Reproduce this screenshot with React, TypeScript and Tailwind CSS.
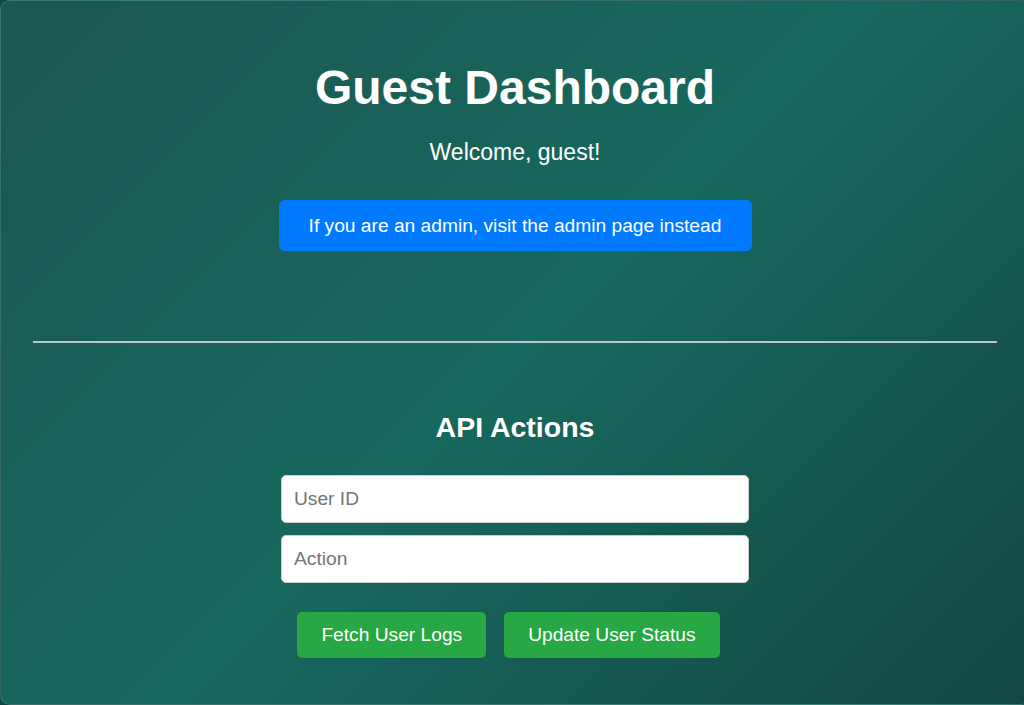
import React from "react";

export default function App() {
  return (
    <div
      className="w-[1024px] h-[705px] overflow-hidden bg-[#134640]"
      style={{ fontFamily: '"Liberation Sans", Arial, sans-serif' }}
    >
      <div className="w-[1030px] h-[705px] rounded-[10px] border border-white/15 bg-[linear-gradient(135deg,#1c5650_0%,#17685e_50%,#134640_100%)] px-[32px] pt-[63px] flex flex-col items-center text-white">
        <h1 className="text-[48px] leading-none font-bold">Guest Dashboard</h1>
        <p className="mt-[29px] text-[23px] leading-none">Welcome, guest!</p>
        <button className="mt-[35.5px] w-[473px] h-[51px] pt-[2px] rounded-[6px] bg-[#007bff] text-white text-[19.2px] leading-none flex items-center justify-center">
          If you are an admin, visit the admin page instead
        </button>
        <div className="mt-[90px] self-stretch h-[2px] bg-[#bcc6c3]" />
        <h2 className="mt-[70px] text-[28.5px] leading-none font-bold">API Actions</h2>
        <input
          placeholder="User ID"
          className="mt-[33.5px] w-[468px] h-[48px] rounded-[5px] border border-[#cccccc] bg-white pl-[12px] text-[19.2px] text-black placeholder:text-[#757575] outline-none"
        />
        <input
          placeholder="Action"
          className="mt-[12px] w-[468px] h-[48px] rounded-[5px] border border-[#cccccc] bg-white pl-[12px] text-[19.2px] text-black placeholder:text-[#757575] outline-none"
        />
        <div className="mt-[29px] flex justify-center gap-[18px] pr-[13px]">
          <button className="h-[46px] px-[24px] rounded-[5px] bg-[#28a745] text-white text-[19.2px] leading-none">
            Fetch User Logs
          </button>
          <button className="h-[46px] px-[24px] rounded-[5px] bg-[#28a745] text-white text-[19.2px] leading-none">
            Update User Status
          </button>
        </div>
      </div>
    </div>
  );
}
